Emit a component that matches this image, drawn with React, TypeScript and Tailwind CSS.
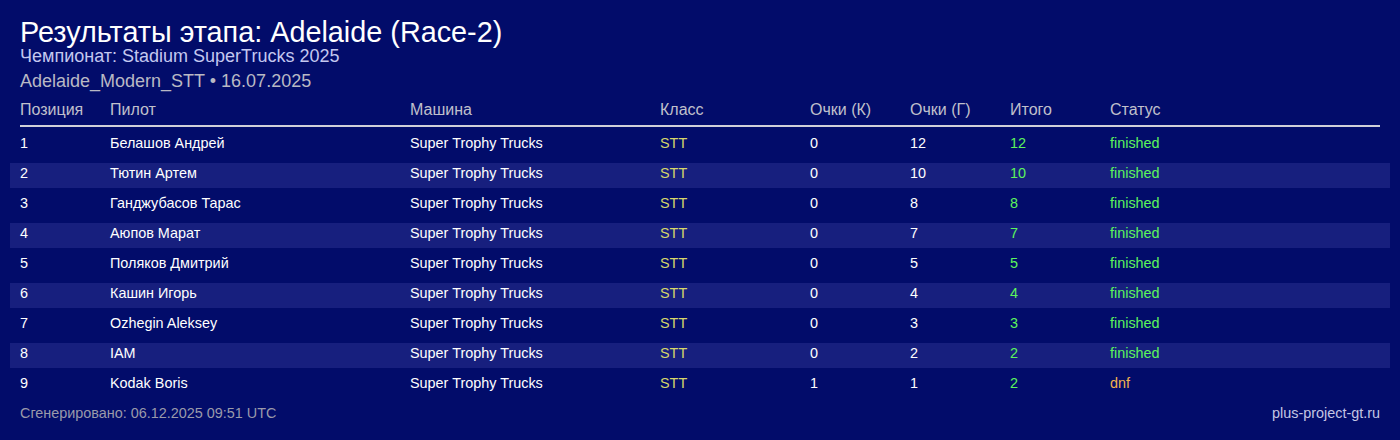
import React from "react";

type Row = { pos: number; pilot: string; k: number; g: number; total: number; status: string };

const rows: Row[] = [
  { pos: 1, pilot: "Белашов Андрей", k: 0, g: 12, total: 12, status: "finished" },
  { pos: 2, pilot: "Тютин Артем", k: 0, g: 10, total: 10, status: "finished" },
  { pos: 3, pilot: "Ганджубасов Тарас", k: 0, g: 8, total: 8, status: "finished" },
  { pos: 4, pilot: "Аюпов Марат", k: 0, g: 7, total: 7, status: "finished" },
  { pos: 5, pilot: "Поляков Дмитрий", k: 0, g: 5, total: 5, status: "finished" },
  { pos: 6, pilot: "Кашин Игорь", k: 0, g: 4, total: 4, status: "finished" },
  { pos: 7, pilot: "Ozhegin Aleksey", k: 0, g: 3, total: 3, status: "finished" },
  { pos: 8, pilot: "IAM", k: 0, g: 2, total: 2, status: "finished" },
  { pos: 9, pilot: "Kodak Boris", k: 1, g: 1, total: 2, status: "dnf" },
];

export default function App() {
  return (
    <div
      className="w-[1400px] h-[440px] bg-[#020c6a] text-white overflow-hidden px-[10px] pt-[17px]"
      style={{ fontFamily: '"Liberation Sans", Arial, sans-serif' }}
    >
      <div className="px-[10px]">
        <h1 className="text-[28.8px] leading-[30px] text-white">Результаты этапа: Adelaide (Race-2)</h1>
        <div className="mt-[-1px] text-[18px] leading-[20px] text-[#c4c8f0]">Чемпионат: Stadium SuperTrucks 2025</div>
        <div className="mt-[5px] text-[18px] leading-[20px] text-[#b9b9c4]">Adelaide_Modern_STT • 16.07.2025</div>
      </div>

      <div className="mx-[10px] mt-[10px] flex border-b-2 border-[#d0d0d8] pb-[6px] text-[16px] leading-[18px] text-[#c0c0cc]">
        <div className="w-[90px]">Позиция</div>
        <div className="w-[300px]">Пилот</div>
        <div className="w-[250px]">Машина</div>
        <div className="w-[150px]">Класс</div>
        <div className="w-[100px]">Очки (К)</div>
        <div className="w-[100px]">Очки (Г)</div>
        <div className="w-[100px]">Итого</div>
        <div className="flex-1">Статус</div>
      </div>

      <div className="mt-[6px] flex flex-col gap-[5px]">
        {rows.map((r) => (
          <div
            key={r.pos}
            className={`flex h-[25px] px-[10px] pt-[2px] text-[14.4px] leading-[16px] ${
              r.pos % 2 === 0 ? "bg-[#171f7e]" : ""
            }`}
          >
            <div className="w-[90px] text-white">{r.pos}</div>
            <div className="w-[300px] text-white">{r.pilot}</div>
            <div className="w-[250px] text-white">Super Trophy Trucks</div>
            <div className="w-[150px] text-[#d6d66a]">STT</div>
            <div className="w-[100px] text-white">{r.k}</div>
            <div className="w-[100px] text-white">{r.g}</div>
            <div className="w-[100px] text-[#5cf55c]">{r.total}</div>
            <div className={`flex-1 ${r.status === "dnf" ? "text-[#f2b24e]" : "text-[#5cf55c]"}`}>{r.status}</div>
          </div>
        ))}
      </div>

      <div className="mx-[10px] mt-[7px] flex justify-between text-[14.4px] leading-[16px]">
        <div className="text-[#9a9aaa]">Сгенерировано: 06.12.2025 09:51 UTC</div>
        <div className="text-[#c4c6e4]">plus-project-gt.ru</div>
      </div>
    </div>
  );
}
